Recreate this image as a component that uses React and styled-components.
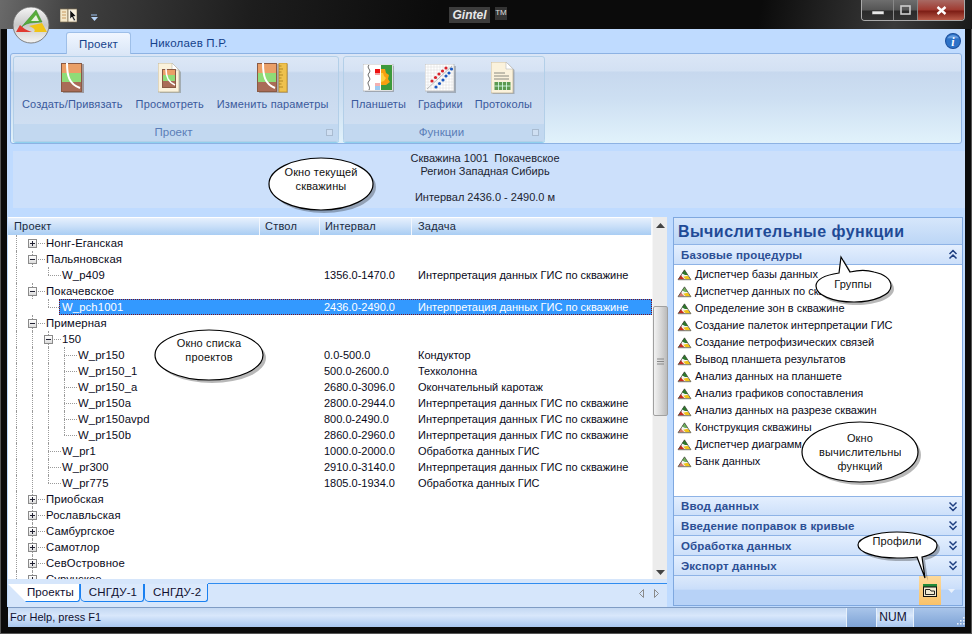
import React from "react";
import styled, { createGlobalStyle } from "styled-components";

const Global = createGlobalStyle`
  html, body { margin: 0; padding: 0; background: #000; overflow: hidden; }
  * { box-sizing: border-box; }
`;
const FONT = `"Liberation Sans", Arial, sans-serif`;

const Window = styled.div`
  position: relative; width: 972px; height: 634px; overflow: hidden;
  display: flex; flex-direction: column; font-family: ${FONT}; font-size: 11px;
  background: #0b0b0b; box-shadow: inset 0 0 0 1px #555;
  padding: 0 7px 7px;
`;
const TitleBar = styled.div`
  height: 29px; flex: none; margin: 0 -7px; padding: 7px 0 0 53px; display: flex; align-items: flex-start;
  background: linear-gradient(100deg, #6a6a6a 0, #3f3f3f 8%, #1d1d1d 26%, #0b0b0b 45%, #0b0b0b 78%, #3a3a3a 92%, #1a1a1a 100%);
  position: relative;
`;
const Qat = styled.div`width: 30px; display: flex; justify-content: center; margin-top: 1px;`;
const QatArrow = styled.div`margin-left: 7px; margin-top: 7px; display: flex;`;
const Brand = styled.div`position: absolute; left: 449px; top: 7px; display: flex; gap: 5px; color: #ddd;`;
const BrandName = styled.span`
  width: 41px; height: 16px; background: #3c3c3c; font: italic bold 12px/16px ${FONT}; text-align: center; color: #e8e8e8;
`;
const BrandTm = styled.span`
  width: 12px; height: 13px; background: #333; font: 8px/11px ${FONT}; text-align: center; color: #ddd;
`;
const WinControls = styled.div`
  position: absolute; right: 7px; top: 0; height: 21px; display: flex; border: 1px solid #aaa; border-top: 0; border-radius: 0 0 4px 4px; overflow: hidden;
`;
const WinBtn = styled.div`
  width: ${p => p.$w}px; display: flex; align-items: center; justify-content: center; border-left: ${p => p.$first ? 0 : 1}px solid #888;
  background: ${p => p.$close ? "linear-gradient(#a86a64, #a03a30 50%, #7c1c14 55%, #b85a48)" : "linear-gradient(#6e6e6e, #555 50%, #2a2a2a 55%, #333)"};
`;

const RibbonArea = styled.div`flex: none; background: #bfdbff; height: 188px; display: flex; flex-direction: column;`;
const TabRow = styled.div`height: 24px; flex: none; display: flex; align-items: flex-end; padding-left: 59px; position: relative;`;
const TopTab = styled.div`
  width: ${p => p.$w}px; height: ${p => p.$active ? 22 : 21}px; text-align: center; color: #15428b; font: 11.5px/22px ${FONT};
  letter-spacing: 0.2px; margin-bottom: ${p => p.$active ? -1 : 0}px; position: relative; z-index: 1;
  ${p => p.$active ? `background: linear-gradient(#f0f6ff, #dbe7f7); border: 1px solid #9ebfe8; border-bottom: 0; border-radius: 3px 3px 0 0;` : ""}
`;
const InfoBtn = styled.div`position: absolute; right: 4px; top: 4px; width: 16px; height: 16px; display: flex;`;
const Ribbon = styled.div`
  height: 91px; flex: none; margin: 0 3px; padding: 2px 2px; display: flex; gap: 4px; border: 1px solid #8db2e3; border-radius: 3px;
  background: linear-gradient(#dbe6f6 0, #d3e1f3 17px, #c7d8ee 18px, #cddff2 50%, #e1f2fb 100%);
`;
const Group = styled.div`
  width: ${p => p.$w}px; height: 86px; border: 1px solid #b3cfe8; border-radius: 3px; display: flex; flex-direction: column;
  background: linear-gradient(#dce7f6 0, #d5e2f4 14px, #c6d7ed 16px, #d2e1f3 100%); box-shadow: 0 1px 0 #8fd0ee;
`;
const GroupBody = styled.div`flex: 1; display: flex; padding-left: ${p => p.$pad}px; gap: ${p => p.$gap}px;`;
const RibbonBtn = styled.div`display: flex; flex-direction: column; align-items: center; padding-top: 5px;`;
const RibbonIcon = styled.div`height: 32px; display: flex; align-items: center;`;
const RibbonLabel = styled.div`margin-top: 3px; white-space: nowrap; color: #3a5a9c; font: 11px/14px ${FONT}; letter-spacing: 0.13px;`;
const GroupCaption = styled.div`
  height: 17px; flex: none; background: #c2d8f0; color: #5b7eb8; font: 11.5px/16px ${FONT}; text-align: center; position: relative; padding-right: 5px;
`;
const Launcher = styled.span`position: absolute; right: 5px; top: 5px; width: 7px; height: 7px; border: 1px solid #a9bbd0; background: #cfdff2;`;

const WellBand = styled.div`
  flex: 1; margin: 7px 0 9px 6px; background: #cce0fb; color: #1c2430; font: 11px/13px ${FONT}; text-align: center; padding-top: 1px;
`;
const WellLine = styled.div`height: ${p => p.$h || 13}px; display: flex; align-items: flex-end; justify-content: center; padding-right: 8px;`;

const Main = styled.div`flex: 1; min-height: 0; display: flex; background: #bfdbff; gap: 6px; padding-left: 1px;`;
const Left = styled.div`width: 659px; flex: none; display: flex; flex-direction: column;`;
const Grid = styled.div`height: 362px; flex: none; display: flex; background: #fff;`;
const TreeCol = styled.div`flex: 1; min-width: 0; display: flex; flex-direction: column; overflow: hidden;`;
const Header = styled.div`
  height: 18px; flex: none; display: grid; grid-template-columns: 252px 60px 92px 1fr; color: #1a2a40; font: 11px/16px ${FONT};
  background: linear-gradient(#e6f0fd, #c9dff8 50%, #a9cdf3); border-top: 1px solid #fff;
`;
const HeaderCell = styled.div`padding-left: ${p => p.$pad || 5}px; border-right: 1px solid #f1f6fd; letter-spacing: 0.2px;`;
const Row = styled.div`
  height: 16px; flex: none; display: grid; grid-template-columns: 252px 60px 92px 1fr; align-items: stretch; font: 11px/16px ${FONT};
  color: ${p => p.$sel ? "#fff" : "#0a0a20"}; position: relative;
`;
const SelBar = styled.div`
  position: absolute; left: 51px; right: 0; top: 0; bottom: 0; background: #3399ff; outline: 1px dotted #7b1020; outline-offset: -1px;
`;
const NameCell = styled.div`display: flex; position: relative; white-space: nowrap;`;
const Cell = styled.div`position: relative; padding-left: ${p => p.$pad || 4}px; white-space: nowrap;`;
const Guide = styled.div`
  width: 16px; flex: none; height: 100%; position: relative;
  &::before { content: ""; position: absolute; left: 8px; top: 0; height: ${p => p.$last ? "50%" : p.$v ? "100%" : 0}; border-left: 1px dotted #9a9a9a; }
  &::after { content: ""; position: absolute; left: 8px; top: 8px; width: ${p => p.$h ? 13 : 0}px; border-top: 1px dotted #9a9a9a; }
`;
const Expander = styled.div`
  position: absolute; left: 4px; top: 4px; width: 9px; height: 9px; border: 1px solid #8a8a8a; background: linear-gradient(#fff, #dcdcdc); z-index: 1;
  &::before { content: ""; position: absolute; left: 1px; top: 3px; width: 5px; height: 1px; background: #223; }
  &::after { content: ""; position: absolute; left: 3px; top: 1px; width: 1px; height: 5px; background: #223; display: ${p => p.$open ? "none" : "block"}; }
`;
const Name = styled.span`padding-left: 6px; position: relative; font-size: 11.3px; letter-spacing: 0.12px;`;
const Scrollbar = styled.div`
  width: 15px; flex: none; background: #ececec; display: flex; flex-direction: column; align-items: center; border-left: 1px solid #f6f6f6;
`;
const ScrollArrow = styled.div`height: ${p => p.$h}px; flex: none; display: flex; align-items: center; justify-content: center;`;
const ScrollGap = styled.div`height: ${p => p.$h}px; flex: none;`;
const Thumb = styled.div`
  width: 15px; height: 110px; flex: none; background: linear-gradient(90deg, #f2f2f2, #d6d6d6 55%, #bbb); border: 1px solid #a0a0a0; border-radius: 2px;
  display: flex; align-items: center; justify-content: center;
`;
const TabsBar = styled.div`
  height: 28px; flex: none; background: #d6e6fb; padding-top: 5px; position: relative; display: flex;
  &::before { content: ""; position: absolute; left: 200px; right: 0; top: 4px; height: 1px; background: #2f8cf0; }
`;
const SheetTab = styled.div`
  height: 18px; padding: 0 ${p => p.$first ? 5 : 6}px 0 ${p => p.$first ? 19 : 8}px; font: 11.5px/16px ${FONT}; color: #101030;
  background: ${p => p.$active ? "#fff" : "#dbe9fc"}; border: 1px solid #1a80f0; border-top: 0; border-left: ${p => p.$first ? 0 : "1px solid #1a80f0"}; border-radius: 0 0 3px 5px; position: relative; letter-spacing: 0.1px;
  ${p => p.$first ? "clip-path: polygon(0 0, 100% 0, 100% 100%, 18px 100%);" : ""}
`;
const TabNav = styled.div`position: absolute; right: 8px; top: 10px; display: flex; gap: 10px;`;

const Panel = styled.div`
  width: 290px; height: 389px; flex: none; background: #fff; border: 1px solid #7fa8df; display: flex; flex-direction: column;
`;
const PanelTitle = styled.div`
  height: 27px; flex: none; background: linear-gradient(#d6e6fb, #bcd6f6); border-bottom: 1px solid #8eb3e6; padding-left: 4px;
  color: #1f4a96; font: bold 16px/27px ${FONT}; letter-spacing: 0.45px;
`;
const PanelGroup = styled.div`
  height: ${p => p.$h || 20}px; flex: none; display: flex; justify-content: space-between; align-items: center; padding: 0 4px 0 7px;
  background: linear-gradient(#e4effe, #cde0fa); border-bottom: 1px solid #8eb3e6; border-top: ${p => p.$top ? "1px solid #8eb3e6" : 0};
  color: #2c4f94; font: bold 11.5px/18px ${FONT}; letter-spacing: 0.15px;
`;
const ProcList = styled.div`height: 231px; flex: none; display: flex; flex-direction: column; padding-top: 1px;`;
const Proc = styled.div`height: 17px; flex: none; display: flex; align-items: center; padding-left: 3px; gap: 3px; font: 11px/17px ${FONT}; color: #0a0a20; white-space: nowrap;`;
const PanelFooter = styled.div`
  flex: 1; display: flex; justify-content: flex-end; align-items: stretch; padding-right: 4px;
  background: linear-gradient(#dce9fb, #cadefa 45%, #b7d2f7 50%, #b7d2f7 100%);
`;
const ProfileBtn = styled.div`width: 22px; margin-right: 3px; background: linear-gradient(#fdd99a, #f9c26a); display: flex; align-items: center; justify-content: center;`;
const FooterMenu = styled.div`width: 14px; display: flex; align-items: center; justify-content: center;`;

const Status = styled.div`
  height: 20px; flex: none; display: flex; margin: 0 0 0 1px; color: #101030; font: 11px/19px ${FONT};
  border-top: 1px solid #7f9cc4; background: linear-gradient(#c4d8f2, #d8e7fb 40%, #a9c7ef);
`;
const StatusMain = styled.div`flex: 1; padding-left: 2px;`;
const StatusPane = styled.div`
  width: ${p => p.$w}px; flex: none; text-align: center; border-left: 1px solid #e6f0fb; font-size: 12px; padding-right: ${p => p.$pr || 0}px;
  display: flex; justify-content: ${p => p.$end ? "flex-end" : "center"}; align-items: ${p => p.$end ? "flex-end" : "stretch"};
  background: ${p => p.$dark ? "linear-gradient(#a9c5ea, #7ea3d6)" : "transparent"};
`;

const CalloutBox = styled.div`
  position: absolute; left: ${p => p.$x}px; top: ${p => p.$y}px; width: ${p => p.$w}px; height: ${p => p.$h}px; z-index: 5;
  color: #111; font: 11px/14px ${FONT}; text-align: center;
`;
const CalloutArt = styled.svg`position: absolute; left: 0; top: 0; overflow: visible;`;
const CalloutText = styled.div`
  position: absolute; left: ${p => p.$l}px; top: ${p => p.$t}px; width: ${p => p.$tw}px; white-space: nowrap; overflow: hidden; letter-spacing: 0.15px;
`;

const LogoBox = styled.div`position: absolute; left: 12px; top: 6px; width: 38px; height: 38px; z-index: 6;`;
const LogoMark = styled.div`position: absolute; left: 3px; top: 3px; display: flex;`;
const LogoDisc = styled.svg`position: absolute; left: 0; top: 0;`;

function Callout({ x, y, w, h, path, tl, tt, tw, children }) {
  return (
    <CalloutBox $x={x} $y={y} $w={w} $h={h}>
      <CalloutArt width={w} height={h} viewBox={`0 0 ${w} ${h}`}>
        <path d={path} fill="#000" opacity="0.28" transform="translate(3 3)" />
        <path d={path} fill="#fff" stroke="#000" strokeWidth="1.2" />
      </CalloutArt>
      <CalloutText $l={tl} $t={tt} $tw={tw}>{children}</CalloutText>
    </CalloutBox>
  );
}
const ellipse = (cx, cy, rx, ry) => `M${cx - rx} ${cy}A${rx} ${ry} 0 1 1 ${cx + rx} ${cy}A${rx} ${ry} 0 1 1 ${cx - rx} ${cy}Z`;

const LogIcon = () => (
  <svg width="23" height="30" viewBox="0 0 23 30">
    <rect x="2" y="1" width="21" height="29" fill="#6b4a3a" opacity=".45" />
    <rect x="0" y="0" width="21" height="29" fill="#8a5a44" />
    <rect x="1" y="1" width="19" height="9" fill="#ea9f67" />
    <rect x="1" y="10" width="19" height="9" fill="#8fdc77" />
    <rect x="1" y="19" width="19" height="9" fill="#a96c57" />
    <path d="M6 0C6 13 8 21 19 25" fill="none" stroke="#fff" strokeWidth="2" />
  </svg>
);
const DocLogIcon = () => (
  <svg width="23" height="30" viewBox="0 0 23 30">
    <path d="M1 1H15L22 8V30H1Z" fill="#6b6b5a" opacity=".4" transform="translate(1 1)" />
    <path d="M0 0H14L21 7V29H0Z" fill="#fbf2dc" stroke="#b9ad90" strokeWidth=".8" />
    <path d="M14 0V7H21Z" fill="#fff" stroke="#b9b9b0" strokeWidth=".6" />
    <rect x="4" y="6" width="14" height="19" fill="#8a5a44" />
    <rect x="5" y="7" width="12" height="5" fill="#ea9f67" />
    <rect x="5" y="12" width="12" height="6" fill="#8fdc77" />
    <rect x="5" y="18" width="12" height="6" fill="#a96c57" />
    <path d="M8 6C8 14 10 19 17 22" fill="none" stroke="#fff" strokeWidth="1.6" />
  </svg>
);
const LogRuleIcon = () => (
  <svg width="31" height="30" viewBox="0 0 31 30">
    <rect x="2" y="1" width="29" height="29" fill="#6b4a3a" opacity=".35" />
    <rect x="0" y="0" width="20" height="29" fill="#8a5a44" />
    <rect x="1" y="1" width="18" height="9" fill="#ea9f67" />
    <rect x="1" y="10" width="18" height="9" fill="#8fdc77" />
    <rect x="1" y="19" width="18" height="9" fill="#a96c57" />
    <path d="M6 0C6 13 8 21 18 25" fill="none" stroke="#fff" strokeWidth="2" />
    <rect x="22" y="0" width="8" height="29" fill="#eec14e" stroke="#b88a22" strokeWidth=".7" />
    {[3, 6, 9, 12, 15, 18, 21, 24].map(y => <path key={y} d={`M22 ${y}h${y % 6 === 0 ? 4 : 2.5}`} stroke="#9a7415" strokeWidth=".7" />)}
  </svg>
);
const TabletIcon = () => (
  <svg width="31" height="28" viewBox="0 0 31 28">
    <rect x="2" y="2" width="30" height="27" fill="#555" opacity=".35" />
    <rect x="0" y="0" width="30" height="27" fill="#fff" stroke="#9a9a9a" strokeWidth=".6" />
    <path d="M6 1c-3 3 3 5 0 8s3 5 0 8s2 5 0 9" fill="none" stroke="#555" strokeWidth=".9" />
    <rect x="12" y="1" width="5" height="4" fill="#fff" />
    <rect x="12" y="5" width="5" height="4" fill="#e11" />
    <rect x="12" y="9" width="5" height="2" fill="#f4a0a0" />
    <rect x="12" y="19" width="5" height="3" fill="#f3b0b0" />
    <rect x="12" y="22" width="5" height="4" fill="#9ccaf0" />
    <rect x="18" y="1" width="11" height="25" fill="#3c9a3c" />
    <path d="M18 5h4l1 4 3 2-1 4 2 3-4 3h-5Z" fill="#f9a010" />
    <path d="M18 9h2l1 3 2 2-2 3-3 1Z" fill="#fcd040" />
  </svg>
);
const ChartIcon = () => {
  const lines = [];
  for (let i = 3; i < 28; i += 3) lines.push(<path key={i} d={`M${i} 0V27M0 ${i}H29`} stroke="#d8d8d8" strokeWidth=".5" />);
  return (
    <svg width="31" height="29" viewBox="0 0 31 29">
      <rect x="2" y="2" width="29" height="27" fill="#555" opacity=".35" />
      <rect x="0" y="0" width="29" height="27" fill="#fff" stroke="#a0a0a0" strokeWidth=".6" />
      {lines}
      <path d="M2 25L27 2" stroke="#bbb" strokeWidth="1" />
      {[[7, 17], [10.5, 13.5], [14, 10], [17.5, 7], [21, 4]].map(([x, y]) => <circle key={x} cx={x} cy={y} r="1.6" fill="#d8222a" />)}
      {[[11, 23], [14.5, 19.5], [18, 16], [21, 12], [24, 9], [26.5, 5]].map(([x, y]) => <circle key={x} cx={x} cy={y} r="1.6" fill="#1a58c0" />)}
    </svg>
  );
};
const ReportIcon = () => (
  <svg width="24" height="32" viewBox="0 0 24 32">
    <path d="M0 0H15L22 7V31H0Z" fill="#555" opacity=".35" transform="translate(1.5 1)" />
    <path d="M0 0H15L22 7V31H0Z" fill="#fbf2dc" stroke="#b9ad90" strokeWidth=".7" />
    <path d="M15 0V7H22Z" fill="#fff" stroke="#bbb" strokeWidth=".6" />
    <path d="M3 11H14M3 14H18M3 17H18" stroke="#8a8a80" strokeWidth="1" />
    <rect x="3.5" y="20" width="16" height="8" fill="#5c9a50" />
    <path d="M3.5 24H19.5M7.5 20V28M11.5 20V28M15.5 20V28" stroke="#dfe" strokeWidth=".8" />
  </svg>
);
const Swirl = () => (
  <svg width="32" height="26" viewBox="0 0 32 26">
    <path d="M21 1L27 13L15 14C10 15 7 17 4 21Z" fill="#58ad3a" stroke="#2f7f2a" strokeWidth=".5" />
    <path d="M21 6L24 12L16 12Z" fill="#e8f2e0" />
    <path d="M1 23L5 16C8 19 11 21 17 23Z" fill="#e03a30" />
    <path d="M14 17L27 14L32 23H19C21 21 19 19 14 17Z" fill="#f0c418" />
  </svg>
);
const ProcIcon = ({ pale }) => (
  <svg width="15" height="12" viewBox="0 0 17 14">
    <path d="M8.5 1L16 12H1Z" fill="#f4f4f4" />
    <path d="M8.5 1L12.5 7H9L5.5 5Z" fill={pale ? "#6fb05e" : "#2c7a2c"} />
    <path d="M1 12L4.5 7C5.5 9.5 7 11 9 12Z" fill={pale ? "#d87868" : "#c92a1c"} />
    <path d="M7 9L12 8L16 12H10Z" fill="#f0c418" />
    <path d="M8.5 1L16 12.5H1Z" fill="none" stroke="#3a3a30" strokeWidth=".8" />
  </svg>
);
const Chevrons = ({ up }) => (
  <svg width="10" height="11" viewBox="0 0 10 11">
    <path d={up ? "M1.5 5L5 1.5L8.5 5M1.5 9.5L5 6L8.5 9.5" : "M1.5 1.5L5 5L8.5 1.5M1.5 6L5 9.5L8.5 6"} fill="none" stroke="#1f3f80" strokeWidth="1.5" />
  </svg>
);

const rows = [
  { n: "Нонг-Еганская", lv: 0, exp: "+" },
  { n: "Пальяновская", lv: 0, exp: "-" },
  { n: "W_p409", lv: 1, last: true, i: "1356.0-1470.0", t: "Интерпретация данных ГИС по скважине" },
  { n: "Покачевское", lv: 0, exp: "-" },
  { n: "W_pch1001", lv: 1, last: true, sel: true, i: "2436.0-2490.0", t: "Интерпретация данных ГИС по скважине" },
  { n: "Примерная", lv: 0, exp: "-" },
  { n: "150", lv: 1, exp: "-" },
  { n: "W_pr150", lv: 2, i: "0.0-500.0", t: "Кондуктор" },
  { n: "W_pr150_1", lv: 2, i: "500.0-2600.0", t: "Техколонна" },
  { n: "W_pr150_a", lv: 2, i: "2680.0-3096.0", t: "Окончательный каротаж" },
  { n: "W_pr150a", lv: 2, i: "2800.0-2944.0", t: "Интерпретация данных ГИС по скважине" },
  { n: "W_pr150avpd", lv: 2, i: "800.0-2490.0", t: "Интерпретация данных ГИС по скважине" },
  { n: "W_pr150b", lv: 2, last: true, i: "2860.0-2960.0", t: "Интерпретация данных ГИС по скважине" },
  { n: "W_pr1", lv: 1, i: "1000.0-2000.0", t: "Обработка данных ГИС" },
  { n: "W_pr300", lv: 1, i: "2910.0-3140.0", t: "Интерпретация данных ГИС по скважине" },
  { n: "W_pr775", lv: 1, last: true, i: "1805.0-1934.0", t: "Обработка данных ГИС" },
  { n: "Приобская", lv: 0, exp: "+" },
  { n: "Рославльская", lv: 0, exp: "+" },
  { n: "Самбургское", lv: 0, exp: "+" },
  { n: "Самотлор", lv: 0, exp: "+" },
  { n: "СевОстровное", lv: 0, exp: "+" },
  { n: "Суручское", lv: 0, exp: "+" },
  { n: "Сургутское", lv: 0, exp: "+" },
];
const procs = [
  "Диспетчер базы данных", "Диспетчер данных по скважине", "Определение зон в скважине", "Создание палеток интерпретации ГИС",
  "Создание петрофизических связей", "Вывод планшета результатов", "Анализ данных на планшете", "Анализ графиков сопоставления",
  "Анализ данных на разрезе скважин", "Конструкция скважины", "Диспетчер диаграмм", "Банк данных",
];

function TreeRow({ r }) {
  return (
    <Row $sel={r.sel}>
      {r.sel && <SelBar />}
      <NameCell>
        <Guide $v />
        {r.lv === 0 ? (
          <Guide $h $v={r.n !== "Нонг-Еганская"}><Expander $open={r.exp === "-"} /></Guide>
        ) : (
          <Guide $v={!r.sel && r.n !== "W_p409"} />
        )}
        {r.lv === 1 && <Guide $v={!r.last} $last={r.last} $h>{r.exp && <Expander $open />}</Guide>}
        {r.lv === 2 && <Guide $v />}
        {r.lv === 2 && <Guide $v={!r.last} $last={r.last} $h />}
        <Name>{r.n}</Name>
      </NameCell>
      <Cell />
      <Cell>{r.i}</Cell>
      <Cell $pad={6}>{r.t}</Cell>
    </Row>
  );
}

export default function App() {
  return (
    <Window>
      <Global />
      <TitleBar>
        <Qat>
          <svg width="17" height="15" viewBox="0 0 17 15">
            <path d="M0 1H8V14H0Z" fill="#f3e6c8" stroke="#7a6a50" strokeWidth=".7" />
            <path d="M8 1H17V14H8Z" fill="#f8f0dc" stroke="#7a6a50" strokeWidth=".7" />
            <path d="M2 4H6M2 7H6M2 10H6" stroke="#c89a60" />
            <path d="M10 2L10 11L12 9L14 13L15.5 12L13.5 8.5L16 8Z" fill="#111" stroke="#fff" strokeWidth=".5" />
          </svg>
        </Qat>
        <QatArrow>
          <svg width="9" height="9" viewBox="0 0 9 9"><path d="M1 1H7" stroke="#9cc2f0" /><path d="M1 3H8L4.5 7Z" fill="#b8d4f8" /></svg>
        </QatArrow>
        <Brand><BrandName>Gintel</BrandName><BrandTm>TM</BrandTm></Brand>
        <WinControls>
          <WinBtn $w={31} $first><svg width="12" height="12" viewBox="0 0 12 12"><rect y="7" width="12" height="3.5" fill="#e8e8e8" stroke="#333" strokeWidth=".6" /></svg></WinBtn>
          <WinBtn $w={24}><svg width="11" height="10" viewBox="0 0 11 10"><rect x="1" y="1" width="9" height="8" fill="none" stroke="#ccc" strokeWidth="1.6" /></svg></WinBtn>
          <WinBtn $w={47} $close><svg width="11" height="9" viewBox="0 0 11 9"><path d="M1.5 1L9.5 8M9.5 1L1.5 8" stroke="#fff" strokeWidth="2.4" /></svg></WinBtn>
        </WinControls>
      </TitleBar>
      <LogoBox>
        <LogoDisc width="38" height="38" viewBox="0 0 38 38">
          <defs>
            <linearGradient id="lg" x1="0" y1="0" x2="0" y2="1"><stop offset="0" stopColor="#f6f6f6" /><stop offset=".5" stopColor="#c8c8c8" /><stop offset="1" stopColor="#f4f4f4" /></linearGradient>
          </defs>
          <circle cx="19" cy="19" r="18" fill="url(#lg)" stroke="#666" strokeWidth=".8" />
        </LogoDisc>
        <LogoMark><Swirl /></LogoMark>
      </LogoBox>
      <RibbonArea>
        <TabRow>
          <TopTab $active $w={65}>Проект</TopTab>
          <TopTab $w={115}>Николаев П.Р.</TopTab>
          <InfoBtn>
            <svg width="16" height="16" viewBox="0 0 15 15">
              <circle cx="7.5" cy="7.5" r="7" fill="#2d72c8" stroke="#1c4f9c" />
              <path d="M2 5a6 5 0 0 1 11 0Z" fill="#8dbcf0" opacity=".6" />
              <text x="7.5" y="12" fontSize="11" fontStyle="italic" fontWeight="bold" fontFamily="Liberation Serif" textAnchor="middle" fill="#fff">i</text>
            </svg>
          </InfoBtn>
        </TabRow>
        <Ribbon>
          <Group $w={326}>
            <GroupBody $pad={8} $gap={13}>
              <RibbonBtn><RibbonIcon><LogIcon /></RibbonIcon><RibbonLabel>Создать/Привязать</RibbonLabel></RibbonBtn>
              <RibbonBtn><RibbonIcon><DocLogIcon /></RibbonIcon><RibbonLabel>Просмотреть</RibbonLabel></RibbonBtn>
              <RibbonBtn><RibbonIcon><LogRuleIcon /></RibbonIcon><RibbonLabel>Изменить параметры</RibbonLabel></RibbonBtn>
            </GroupBody>
            <GroupCaption>Проект<Launcher /></GroupCaption>
          </Group>
          <Group $w={202}>
            <GroupBody $pad={7} $gap={12}>
              <RibbonBtn><RibbonIcon><TabletIcon /></RibbonIcon><RibbonLabel>Планшеты</RibbonLabel></RibbonBtn>
              <RibbonBtn><RibbonIcon><ChartIcon /></RibbonIcon><RibbonLabel>Графики</RibbonLabel></RibbonBtn>
              <RibbonBtn><RibbonIcon><ReportIcon /></RibbonIcon><RibbonLabel>Протоколы</RibbonLabel></RibbonBtn>
            </GroupBody>
            <GroupCaption>Функции<Launcher /></GroupCaption>
          </Group>
        </Ribbon>
        <WellBand>
          <WellLine>Скважина 1001&nbsp; Покачевское</WellLine>
          <WellLine>Регион Западная Сибирь</WellLine>
          <WellLine $h={26}>Интервал 2436.0 - 2490.0 м</WellLine>
        </WellBand>
      </RibbonArea>
      <Main>
        <Left>
          <Grid>
            <TreeCol>
              <Header>
                <HeaderCell $pad={6}>Проект</HeaderCell>
                <HeaderCell>Ствол</HeaderCell>
                <HeaderCell>Интервал</HeaderCell>
                <HeaderCell $pad={6}>Задача</HeaderCell>
              </Header>
              {rows.map(r => <TreeRow key={r.n} r={r} />)}
            </TreeCol>
            <Scrollbar>
              <ScrollArrow $h={17}><svg width="9" height="5"><path d="M4.5 0L9 5H0Z" fill="#444" /></svg></ScrollArrow>
              <ScrollGap $h={72} />
              <Thumb><svg width="7" height="7"><path d="M0 1H7M0 3.5H7M0 6H7" stroke="#888" /></svg></Thumb>
              <ScrollGap $h={150} />
              <ScrollArrow $h={13}><svg width="9" height="5"><path d="M4.5 5L9 0H0Z" fill="#444" /></svg></ScrollArrow>
            </Scrollbar>
          </Grid>
          <TabsBar>
            <SheetTab $first $active>Проекты</SheetTab>
            <SheetTab>СНГДУ-1</SheetTab>
            <SheetTab>СНГДУ-2</SheetTab>
            <TabNav>
              <svg width="5" height="9" viewBox="0 0 5 9"><path d="M4.5 .5V8.5L.5 4.5Z" fill="none" stroke="#8a8a8a" /></svg>
              <svg width="5" height="9" viewBox="0 0 5 9"><path d="M.5 .5V8.5L4.5 4.5Z" fill="none" stroke="#8a8a8a" /></svg>
            </TabNav>
          </TabsBar>
        </Left>
        <Panel>
          <PanelTitle>Вычислительные функции</PanelTitle>
          <PanelGroup><span>Базовые процедуры</span><Chevrons up /></PanelGroup>
          <ProcList>
            {procs.map((p, i) => <Proc key={p}><ProcIcon pale={i === 1 || i === 9 || i === 11} />{p}</Proc>)}
          </ProcList>
          <PanelGroup $top><span>Ввод данных</span><Chevrons /></PanelGroup>
          <PanelGroup><span>Введение поправок в кривые</span><Chevrons /></PanelGroup>
          <PanelGroup><span>Обработка данных</span><Chevrons /></PanelGroup>
          <PanelGroup><span>Экспорт данных</span><Chevrons /></PanelGroup>
          <PanelFooter>
            <ProfileBtn>
              <svg width="14" height="13" viewBox="0 0 14 13">
                <rect width="14" height="13" fill="#111" />
                <rect y="0" width="14" height="2.5" fill="#1f8a3a" />
                <rect x="1" y="3.5" width="12" height="8.5" fill="#f2ead2" />
                <path d="M2.5 5.5H7L8 7H11.5V10.5H2.5Z" fill="none" stroke="#111" strokeWidth=".9" />
              </svg>
            </ProfileBtn>
            <FooterMenu><svg width="7" height="4"><path d="M0 0H7L3.5 4Z" fill="#eaf2fd" /></svg></FooterMenu>
          </PanelFooter>
        </Panel>
      </Main>
      <Status>
        <StatusMain>For Help, press F1</StatusMain>
        <StatusPane $w={30} $dark />
        <StatusPane $w={37} $pr={4}>NUM</StatusPane>
        <StatusPane $w={52} $dark $end>
          <svg width="11" height="11" viewBox="0 0 11 11">
            {[[9, 1], [6, 4], [9, 4], [3, 7], [6, 7], [9, 7]].map(([x, y]) => <rect key={`${x}-${y}`} x={x} y={y} width="1.6" height="1.6" fill="#e8f0fb" />)}
          </svg>
        </StatusPane>
      </Status>
      <Callout x={266} y={155} w={112} h={60} path={ellipse(55, 29, 52, 26)} tl={3} tt={10} tw={104}>Окно текущей<br />скважины</Callout>
      <Callout x={152} y={327} w={116} h={58} path={ellipse(57, 28, 54, 25)} tl={3} tt={9} tw={108}>Окно списка<br />проектов</Callout>
      <Callout x={812} y={253} w={84} h={54} path={`M29 4L38 19C46 17 56 17 62 19C72 21 79 26 79 33C79 42 62 49 42 49C20 49 4 42 4 33C4 26 14 22 27 20Z`} tl={6} tt={24} tw={70}>Группы</Callout>
      <Callout x={799} y={419} w={124} h={68} path={ellipse(61, 33, 58, 30)} tl={20} tt={12} tw={82}>Окно<br />вычислительных<br />функций</Callout>
      <Callout x={855} y={530} w={84} h={52} path={`M70 48L62 27C55 28 48 28 42 28C20 28 3 22 3 15C3 8 20 2 42 2C64 2 82 8 82 15C82 21 76 25 67 27Z`} tl={3} tt={4} tw={78}>Профили</Callout>
    </Window>
  );
}
